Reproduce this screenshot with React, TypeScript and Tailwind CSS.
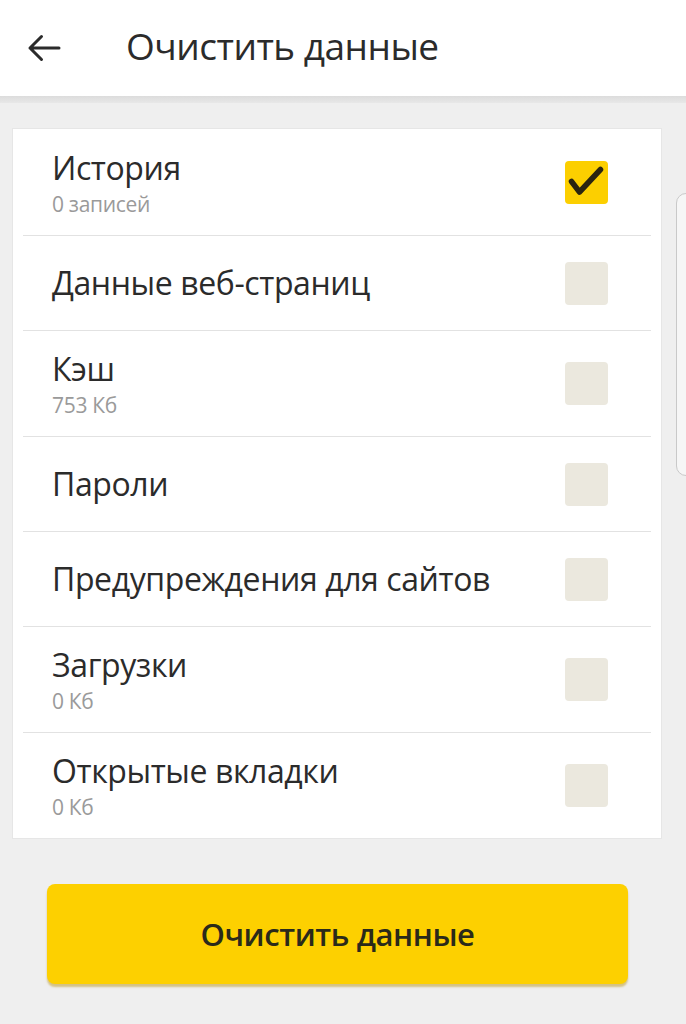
import React, { useState } from 'react';

type Item = { title: string; sub?: string; checked?: boolean };

const items: Item[] = [
  { title: 'История', sub: '0 записей', checked: true },
  { title: 'Данные веб-страниц' },
  { title: 'Кэш', sub: '753 Кб' },
  { title: 'Пароли' },
  { title: 'Предупреждения для сайтов' },
  { title: 'Загрузки', sub: '0 Кб' },
  { title: 'Открытые вкладки', sub: '0 Кб' },
];

function ArrowLeft() {
  return (
    <svg width="36" height="36" viewBox="0 0 36 36" fill="none">
      <path d="M33 18H4M15.5 6.5 4 18l11.5 11.5" stroke="#2b2b2b" strokeWidth="3" strokeLinecap="round" strokeLinejoin="round" />
    </svg>
  );
}

function Checkbox({ checked, onClick }: { checked: boolean; onClick: () => void }) {
  return (
    <button
      onClick={onClick}
      className={`w-[43px] h-[43px] rounded-[4px] flex items-center justify-center shrink-0 ${checked ? 'bg-[#fccf00]' : 'bg-[#ebe8de]'}`}
    >
      {checked && (
        <svg width="43" height="43" viewBox="0 0 43 43" fill="none">
          <path d="M6.5 20.5l8 10.5L35.5 8.5" stroke="#2a2410" strokeWidth="5.5" strokeLinecap="round" strokeLinejoin="round" />
        </svg>
      )}
    </button>
  );
}

export default function App() {
  const [checks, setChecks] = useState(items.map((i) => !!i.checked));

  return (
    <div className="relative w-[686px] h-[1024px] bg-[#efefef] overflow-hidden font-['Open_Sans',sans-serif]">
      {/* Header */}
      <div className="h-[96px] bg-white flex items-center pl-[26px] relative z-10">
        <ArrowLeft />
        <h1 className="ml-[64px] text-[37px] leading-[50px] text-[#2b2b2b] tracking-[-0.5px] -mt-[4px]">Очистить данные</h1>
      </div>
      <div className="h-[7px] bg-gradient-to-b from-[#dcdcdc] to-[#e8e8e8]" />

      {/* Card */}
      <div className="mt-[25px] ml-[12px] w-[650px] bg-white border border-[#e6e6e6] px-[10px]">
        {items.map((item, i) => (
          <div
            key={item.title}
            className={`flex items-center justify-between pl-[29px] pr-[43px] ${i > 0 ? 'border-t border-[#e2e2e2]' : ''} ${item.sub ? 'h-[106px]' : 'h-[95px]'}`}
          >
            <div className="flex flex-col">
              <span className="text-[32px] leading-[44px] text-[#2b2b2b] tracking-[-0.4px]">{item.title}</span>
              {item.sub && <span className="text-[21px] leading-[29px] text-[#9a9a9a] tracking-[-0.3px]">{item.sub}</span>}
            </div>
            <Checkbox
              checked={checks[i]}
              onClick={() => setChecks((c) => c.map((v, j) => (j === i ? !v : v)))}
            />
          </div>
        ))}
      </div>

      {/* Button */}
      <div className="pl-[47px] pr-[58px] mt-[45px]">
        <button className="w-full h-[100px] rounded-[8px] bg-[#fdd000] shadow-[0_3px_2px_rgba(180,140,0,0.45)] text-[31px] font-semibold text-[#2a2a1a] tracking-[-0.4px]">
          Очистить данные
        </button>
      </div>

      {/* Scroll indicator */}
      <div className="absolute left-[676px] top-[193px] w-[30px] h-[283px] rounded-[10px] border border-[#c9c9c9] bg-[#f6f6f6]" />
    </div>
  );
}
